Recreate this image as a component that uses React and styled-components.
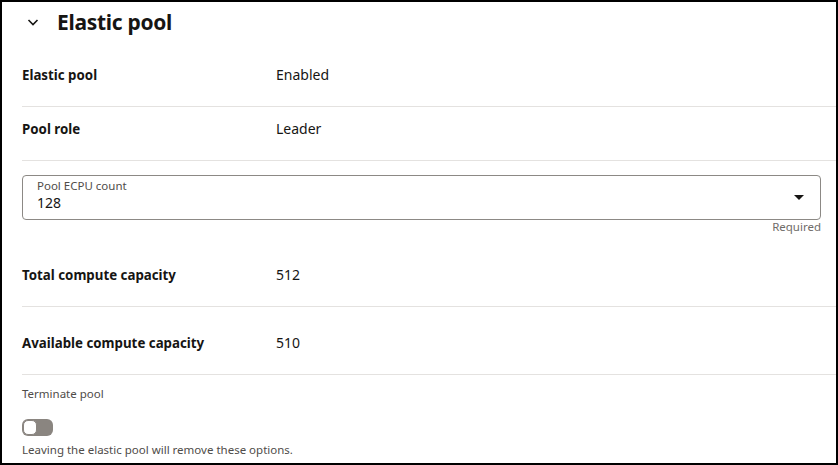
import React, {useState} from 'react';
import styled, {createGlobalStyle} from "styled-components";

const GlobalStyle = createGlobalStyle`
  html, body {
    margin: 0;
    padding: 0;
    background: #fff;
  }
  body {
    font-family: "Noto Sans", "Open Sans", sans-serif;
    color: #161513;
  }
`

const Frame = styled.div`
  box-sizing: border-box;
  width: 838px;
  height: 465px;
  border: 2px solid #000;
  padding: 0 0 0 20px;
  overflow: hidden;
`
const Header = styled.div`
  display: flex;
  align-items: center;
  height: 42px;
  padding-left: 4px;
  gap: 17px;
  padding-bottom: 2px;
  box-sizing: border-box;
`
const Title = styled.h2`
  margin: 0;
  font-size: 21px;
  font-weight: 700;
  letter-spacing: -0.3px;
`
const Row = styled.div`
  box-sizing: border-box;
  display: grid;
  grid-template-columns: 254px 1fr;
  align-items: end;
  height: ${p => p.h || 60}px;
  padding-bottom: 21px;
  border-bottom: 1px solid #e4e2e0;
  line-height: 20px;
`
const Label = styled.div`
  font-weight: 700;
  font-size: 13.3px;
`
const Value = styled.div`
  font-size: 14px;
`
const SelectWrap = styled.div`
  padding: 14px 15px 0 0;
`
const SelectBox = styled.div`
  box-sizing: border-box;
  height: 45px;
  border: 1px solid #8c8985;
  border-radius: 4px;
  display: flex;
  align-items: flex-start;
  padding: 3px 14px 0 14px;
`
const SelectText = styled.div`
  flex: 1;
  display: flex;
  flex-direction: column;
`
const SmallLabel = styled.div`
  font-size: 11.5px;
  color: #4f4c49;
  line-height: 14px;
`
const SelectValue = styled.div`
  font-size: 14px;
  line-height: 20px;
`
const Caret = styled.div`
  align-self: center;
  width: 0;
  height: 0;
  border-left: 5px solid transparent;
  border-right: 5px solid transparent;
  border-top: 5px solid #161513;
  margin: 0 2px 4px 0;
`
const Hint = styled.div`
  text-align: right;
  font-size: 11.5px;
  line-height: 14px;
  color: #6f6c69;
`
const Section = styled.div`
  padding-top: 12px;
`
const ToggleTrack = styled.button`
  box-sizing: border-box;
  width: 31px;
  height: 17px;
  border-radius: 6px;
  border: none;
  background: #8a8580;
  margin: 18px 0 7px 0;
  padding: 0;
  position: relative;
  display: block;
  cursor: pointer;
`
const ToggleKnob = styled.span`
  position: absolute;
  top: 1px;
  left: 1px;
  width: 14px;
  height: 15px;
  box-sizing: border-box;
  border-radius: 5px;
  background: #fff;
  border: 1px solid #8a8580;
`
const Help = styled.div`
  font-size: 11.5px;
  line-height: 14px;
  color: #4f4c49;
`

const Chevron = () => (
    <svg width="14" height="14" viewBox="0 0 14 14" fill="none">
        <path d="M2.5 5l4.5 4.5L11.5 5" stroke="#161513" strokeWidth="1.6"/>
    </svg>
)

const App = () => {
    const [on, setOn] = useState(false)

    return (
        <>
            <GlobalStyle/>
            <Frame>
                <Header>
                    <Chevron/>
                    <Title>Elastic pool</Title>
                </Header>
                <Row h={63}>
                    <Label>Elastic pool</Label>
                    <Value>Enabled</Value>
                </Row>
                <Row h={54}>
                    <Label>Pool role</Label>
                    <Value>Leader</Value>
                </Row>
                <SelectWrap>
                    <SelectBox>
                        <SelectText>
                            <SmallLabel>Pool ECPU count</SmallLabel>
                            <SelectValue>128</SelectValue>
                        </SelectText>
                        <Caret/>
                    </SelectBox>
                    <Hint>Required</Hint>
                </SelectWrap>
                <Row h={73}>
                    <Label>Total compute capacity</Label>
                    <Value>512</Value>
                </Row>
                <Row h={68}>
                    <Label>Available compute capacity</Label>
                    <Value>510</Value>
                </Row>
                <Section>
                    <SmallLabel>Terminate pool</SmallLabel>
                    <ToggleTrack onClick={() => setOn(!on)}>
                        <ToggleKnob/>
                    </ToggleTrack>
                    <Help>Leaving the elastic pool will remove these options.</Help>
                </Section>
            </Frame>
        </>
    );
};

export default App;
